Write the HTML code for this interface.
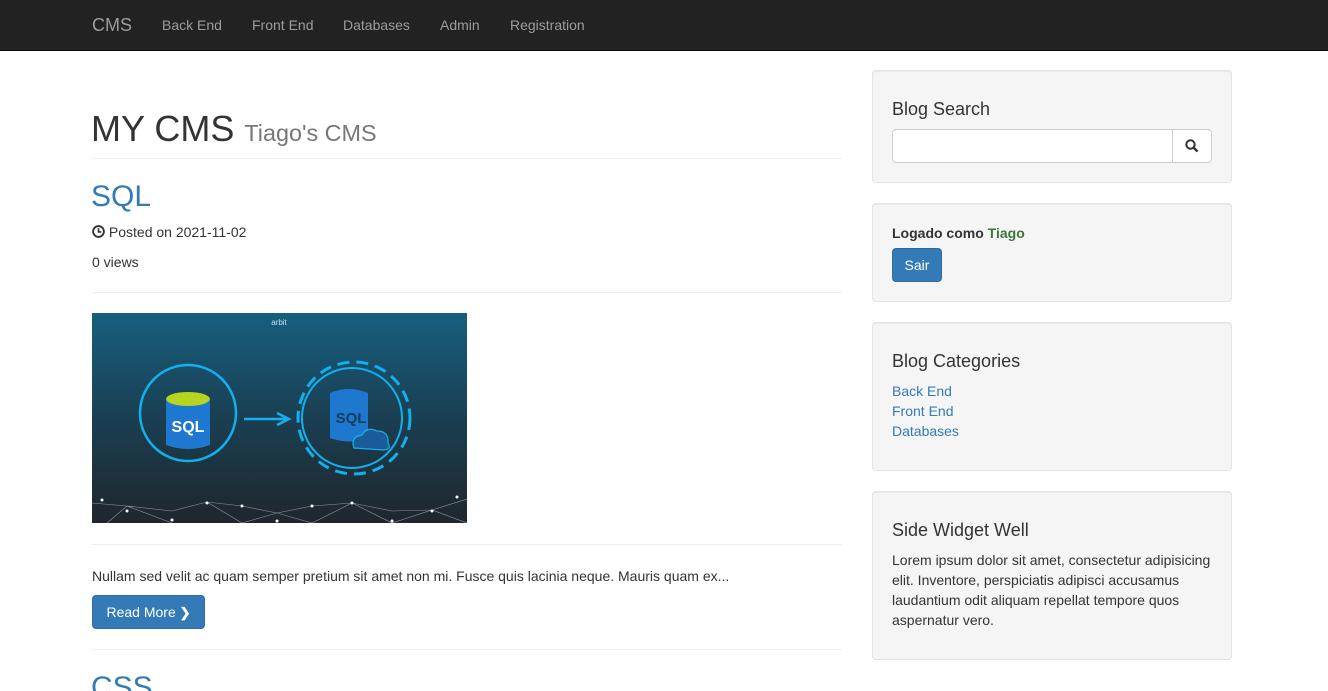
<!DOCTYPE html>
<html><head><meta charset="utf-8"><style>
*{box-sizing:border-box;margin:0;padding:0}
html,body{width:1328px;height:691px;overflow:hidden}
body{background:#fff;font-family:"Liberation Sans",sans-serif;font-size:14px;color:#333;position:relative}
.a{position:absolute;white-space:nowrap}
nav{position:absolute;left:0;top:0;width:1328px;height:51px;background:#222;border-bottom:1px solid #080808}
nav span{position:absolute;top:0;line-height:50px;color:#9d9d9d;font-size:14px}
.hr{position:absolute;left:92px;width:750px;height:1px;background:#eee}
.well{position:absolute;left:872px;width:360px;background:#f5f5f5;border:1px solid #e3e3e3;border-radius:4px;box-shadow:inset 0 1px 1px rgba(0,0,0,.05)}
.btn{position:absolute;background:#337ab7;border:1px solid #2e6da4;border-radius:4px;color:#fff;font-size:14px;text-align:center}
.lnk{color:#337ab7}
</style></head><body>
<nav>
<span style="left:92px;font-size:18px">CMS</span>
<span style="left:162px">Back End</span>
<span style="left:252px">Front End</span>
<span style="left:343px">Databases</span>
<span style="left:440px">Admin</span>
<span style="left:510px">Registration</span>
</nav>

<div class="a" style="left:91px;top:109px;font-size:36px;line-height:40px;color:#333">MY CMS <span style="font-size:23.4px;color:#777">Tiago's CMS</span></div>
<div class="hr" style="top:158px"></div>
<div class="a lnk" style="left:91px;top:180px;font-size:30px;line-height:34px">SQL</div>
<div class="a" style="left:92px;top:223px;line-height:18px"><svg width="13" height="13" viewBox="0 0 14 14" style="vertical-align:-1px"><circle cx="7" cy="7" r="5.8" fill="none" stroke="#333" stroke-width="2"/><path d="M7 3.5V7.5H10" fill="none" stroke="#333" stroke-width="1.8"/></svg> Posted on 2021-11-02</div>
<div class="a" style="left:92px;top:253px;line-height:18px">0 views</div>
<div class="hr" style="top:292px"></div>

<svg class="a" style="left:92px;top:313px" width="375" height="210" viewBox="0 0 375 210">
<defs><linearGradient id="g" x1="0" y1="0" x2="0" y2="1"><stop offset="0" stop-color="#175f7f"/><stop offset=".5" stop-color="#1a3f52"/><stop offset="1" stop-color="#20262c"/></linearGradient></defs>
<rect width="375" height="210" fill="url(#g)"/>
<text x="187" y="12" fill="#cde" font-size="8" text-anchor="middle" font-family="Liberation Sans">arbit</text>
<circle cx="96" cy="100" r="48" fill="none" stroke="#12b0ee" stroke-width="2.5"/>
<path d="M74 88 Q96 78 118 88 V132 Q96 140 74 132Z" fill="#1e78d0"/>
<ellipse cx="96" cy="86" rx="22" ry="7" fill="#b7d420"/>
<text x="96" y="119" fill="#fff" font-size="16" font-weight="bold" text-anchor="middle" font-family="Liberation Sans">SQL</text>
<path d="M152 106H195M185 100L197 106L185 112" fill="none" stroke="#12b0ee" stroke-width="2.5"/>
<circle cx="260" cy="105" r="50" fill="none" stroke="#12b0ee" stroke-width="2"/>
<circle cx="262" cy="105" r="56" fill="none" stroke="#12b0ee" stroke-width="3" stroke-dasharray="12 7"/>
<path d="M238 80 Q257 72 276 80 V125 Q257 132 238 125Z" fill="#1e78d0"/>
<text x="259" y="110" fill="#163a5c" font-size="15" font-weight="bold" text-anchor="middle" font-family="Liberation Sans">SQL</text>
<path d="M262 135 Q258 124 270 122 Q275 113 285 118 Q297 118 296 130 Q300 136 292 137Z" fill="#1a5c98" stroke="#12b0ee" stroke-width="1.2"/>
<path d="M0 190 L35 193 L80 198 L115 189 L150 193 L185 200 L220 193 L260 190 L300 198 L340 197 L375 186 M15 210 L35 193 L80 210 M115 189 L150 210 L185 200 L220 210 L260 190 L300 210 L340 197 L375 210" fill="none" stroke="#8899aa" stroke-width=".6"/>
<g fill="#fff"><circle cx="10" cy="187" r="1.5"/><circle cx="35" cy="198" r="1.5"/><circle cx="80" cy="207" r="1.5"/><circle cx="115" cy="190" r="1.5"/><circle cx="150" cy="193" r="1.5"/><circle cx="185" cy="208" r="1.5"/><circle cx="220" cy="193" r="1.5"/><circle cx="260" cy="190" r="1.5"/><circle cx="300" cy="208" r="1.5"/><circle cx="340" cy="198" r="1.5"/><circle cx="365" cy="184" r="1.5"/></g>
</svg>

<div class="hr" style="top:544px"></div>
<div class="a" style="left:92px;top:566px;line-height:20px">Nullam sed velit ac quam semper pretium sit amet non mi. Fusce quis lacinia neque. Mauris quam ex...</div>
<div class="btn" style="left:92px;top:595px;width:113px;height:34px;line-height:32px">Read More <b style="font-size:13px">&#10095;</b></div>
<div class="hr" style="top:649px"></div>
<div class="a lnk" style="left:91px;top:671px;font-size:30px;line-height:34px">CSS</div>

<div class="well" style="top:70px;height:113px">
<div class="a" style="left:19px;top:27px;font-size:18px;line-height:22px">Blog Search</div>
<div class="a" style="left:19px;top:58px;width:281px;height:34px;background:#fff;border:1px solid #ccc;border-radius:4px 0 0 4px"></div>
<div class="a" style="left:299px;top:58px;width:40px;height:34px;background:#fff;border:1px solid #ccc;border-radius:0 4px 4px 0"><svg width="14" height="14" viewBox="0 0 14 14" style="position:absolute;left:12px;top:9px"><circle cx="5.5" cy="5.5" r="4.2" fill="none" stroke="#333" stroke-width="2"/><path d="M8.5 8.5L12.5 12.5" stroke="#333" stroke-width="2.4"/></svg></div>
</div>

<div class="well" style="top:203px;height:99px">
<div class="a" style="left:19px;top:19px;line-height:20px;font-weight:bold">Logado como <span style="color:#3c763d">Tiago</span></div>
<div class="btn" style="left:19px;top:44px;width:50px;height:34px;line-height:32px">Sair</div>
</div>

<div class="well" style="top:322px;height:149px">
<div class="a" style="left:19px;top:27px;font-size:18px;line-height:22px">Blog Categories</div>
<div class="a lnk" style="left:19px;top:58px;line-height:20px">Back End<br>Front End<br>Databases</div>
</div>

<div class="well" style="top:491px;height:169px">
<div class="a" style="left:19px;top:27px;font-size:18px;line-height:22px">Side Widget Well</div>
<div class="a" style="left:19px;top:58px;line-height:20px;white-space:normal;width:325px">Lorem ipsum dolor sit amet, consectetur adipisicing elit. Inventore, perspiciatis adipisci accusamus laudantium odit aliquam repellat tempore quos aspernatur vero.</div>
</div>
</body></html>
